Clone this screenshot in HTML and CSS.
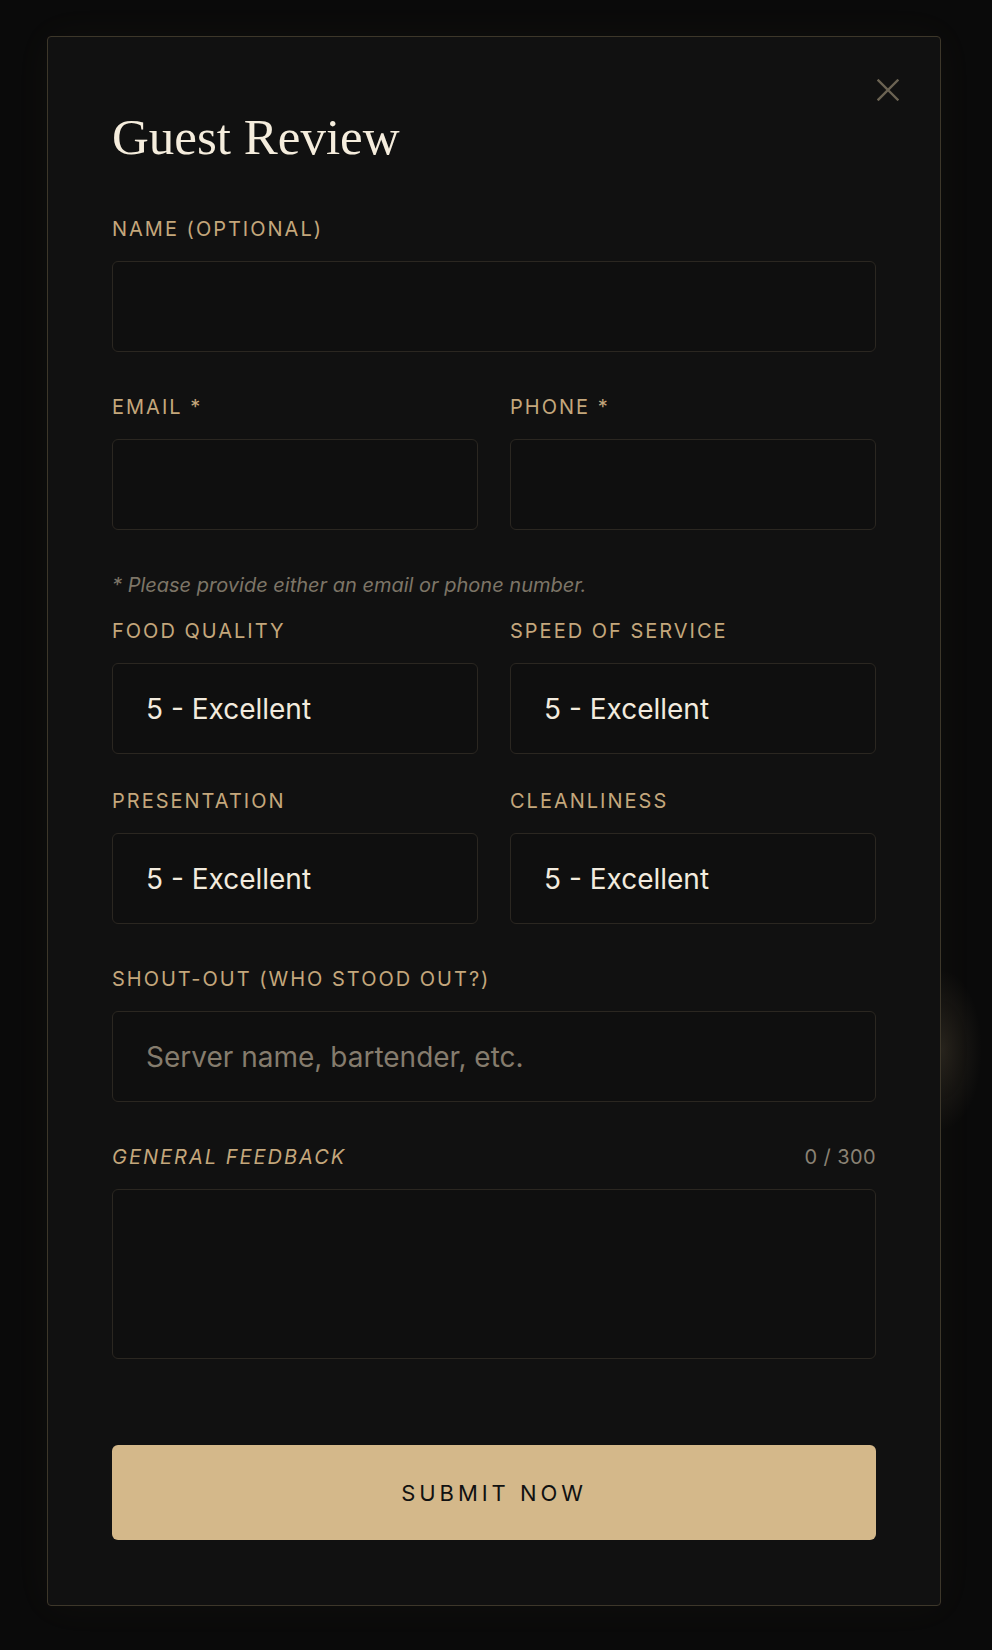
FILE: index.html
```html
<!DOCTYPE html>
<html lang="en">
<head>
    <meta charset="UTF-8">
    <meta name="viewport" content="width=device-width, initial-scale=1.0">
    <title>Guest Review</title>
    <link rel="stylesheet" href="styles.css">
</head>
<body>
    <div class="overlay">
        <div class="modal">
            <button class="close" type="button" aria-label="Close">
                <svg width="22" height="22" viewBox="0 0 22 22" fill="none" stroke="currentColor" stroke-width="2.4" stroke-linecap="square">
                    <path d="M1.5 1.5 L20.5 20.5 M20.5 1.5 L1.5 20.5"/>
                </svg>
            </button>

            <h1 class="title">Guest Review</h1>

            <form class="review-form">
                <div class="field">
                    <label for="guestName">NAME (OPTIONAL)</label>
                    <input class="control" type="text" id="guestName">
                </div>

                <div class="row">
                    <div class="field">
                        <label for="guestEmail">EMAIL *</label>
                        <input class="control" type="email" id="guestEmail">
                    </div>
                    <div class="field">
                        <label for="guestPhone">PHONE *</label>
                        <input class="control" type="tel" id="guestPhone">
                    </div>
                </div>

                <p class="note">* Please provide either an email or phone number.</p>

                <div class="ratings">
                    <div class="field">
                        <label for="food">FOOD QUALITY</label>
                        <select class="control" id="food">
                            <option>5 - Excellent</option>
                            <option>4 - Good</option>
                            <option>3 - Average</option>
                            <option>2 - Poor</option>
                            <option>1 - Terrible</option>
                        </select>
                    </div>
                    <div class="field">
                        <label for="speed">SPEED OF SERVICE</label>
                        <select class="control" id="speed">
                            <option>5 - Excellent</option>
                            <option>4 - Good</option>
                            <option>3 - Average</option>
                            <option>2 - Poor</option>
                            <option>1 - Terrible</option>
                        </select>
                    </div>
                    <div class="field">
                        <label for="presentation">PRESENTATION</label>
                        <select class="control" id="presentation">
                            <option>5 - Excellent</option>
                            <option>4 - Good</option>
                            <option>3 - Average</option>
                            <option>2 - Poor</option>
                            <option>1 - Terrible</option>
                        </select>
                    </div>
                    <div class="field">
                        <label for="cleanliness">CLEANLINESS</label>
                        <select class="control" id="cleanliness">
                            <option>5 - Excellent</option>
                            <option>4 - Good</option>
                            <option>3 - Average</option>
                            <option>2 - Poor</option>
                            <option>1 - Terrible</option>
                        </select>
                    </div>
                </div>

                <div class="field">
                    <label for="shoutout">SHOUT-OUT (WHO STOOD OUT?)</label>
                    <input class="control" type="text" id="shoutout" placeholder="Server name, bartender, etc.">
                </div>

                <div class="field field-last">
                    <div class="label-row">
                        <label for="feedback" class="label-italic">GENERAL FEEDBACK</label>
                        <span class="counter" id="counter">0 / 300</span>
                    </div>
                    <textarea class="control" id="feedback" maxlength="300"></textarea>
                </div>

                <button class="submit" type="submit">SUBMIT NOW</button>
            </form>
        </div>
    </div>

    <script>
        const feedback = document.getElementById('feedback');
        const counter = document.getElementById('counter');

        feedback.addEventListener('input', () => {
            counter.innerText = `${feedback.value.length} / 300`;
        });

        document.querySelector('.review-form').addEventListener('submit', (e) => {
            e.preventDefault();
        });
    </script>
</body>
</html>
```

FILE: styles.css
```css
html {
    background-color: #0a0a0a;
}

body {
    margin: 0;
    min-height: 1650px;
    font-family: Inter, "Noto Sans", sans-serif;
    background:
        radial-gradient(ellipse 40px 80px at 942px 1050px, rgba(212, 184, 138, 0.13), transparent 100%),
        #0a0a0a;
}

.overlay {
    padding: 36px 51px 46px 47px;
}

.modal {
    position: relative;
    background-color: #111111;
    border: 1px solid #3d372a;
    border-radius: 4px;
    padding: 64px 64px 65px;
    box-shadow: 0 0 40px rgba(212, 184, 138, 0.04);
}

.close {
    position: absolute;
    top: 42px;
    right: 41px;
    width: 22px;
    height: 22px;
    padding: 0;
    border: 0;
    background: none;
    color: #6b6353;
    cursor: pointer;
}

.close svg {
    display: block;
}

.title {
    font-family: "Liberation Serif", "Times New Roman", serif;
    font-weight: 400;
    font-size: 51px;
    line-height: 1.2;
    color: #f5eddd;
    margin: 6px 0 47px;
}

.field {
    margin-bottom: 41px;
}

.field label {
    display: block;
    font-size: 20px;
    line-height: 28px;
    letter-spacing: 0.1em;
    color: #c4a77c;
    margin-bottom: 18px;
}

.label-italic {
    font-style: italic;
}

.row,
.ratings {
    display: grid;
    grid-template-columns: 1fr 1fr;
    column-gap: 32px;
}

.ratings {
    row-gap: 33px;
    margin-bottom: 41px;
}

.ratings .field {
    margin-bottom: 0;
}

.control {
    display: block;
    width: 100%;
    height: 91px;
    box-sizing: border-box;
    padding: 0 33px;
    margin: 0;
    background-color: #0f0f0f;
    border: 1px solid #2b2721;
    border-radius: 6px;
    font-family: Inter, "Noto Sans", sans-serif;
    font-size: 28px;
    color: #f2ebde;
    outline: none;
    appearance: none;
    -webkit-appearance: none;
}

.control::placeholder {
    color: #857c6d;
}

.control:focus {
    border-color: #6b5d45;
}

textarea.control {
    height: 170px;
    padding: 22px 33px;
    resize: none;
}

.note {
    margin: 0 0 18px;
    font-size: 20px;
    line-height: 28px;
    font-style: italic;
    color: #7d7567;
}

.label-row {
    display: flex;
    justify-content: space-between;
    align-items: baseline;
    margin-bottom: 18px;
}

.label-row label {
    margin-bottom: 0;
}

.counter {
    font-size: 20px;
    line-height: 28px;
    letter-spacing: 0.02em;
    color: #8a8274;
}

.field-last {
    margin-bottom: 0;
}

.submit {
    display: block;
    width: 100%;
    height: 95px;
    margin-top: 86px;
    background-color: #d4b88a;
    border: 0;
    border-radius: 6px;
    font-family: Inter, "Noto Sans", sans-serif;
    font-size: 22px;
    letter-spacing: 0.18em;
    color: #111111;
    cursor: pointer;
}

.submit:hover {
    background-color: #dcc296;
}
```
